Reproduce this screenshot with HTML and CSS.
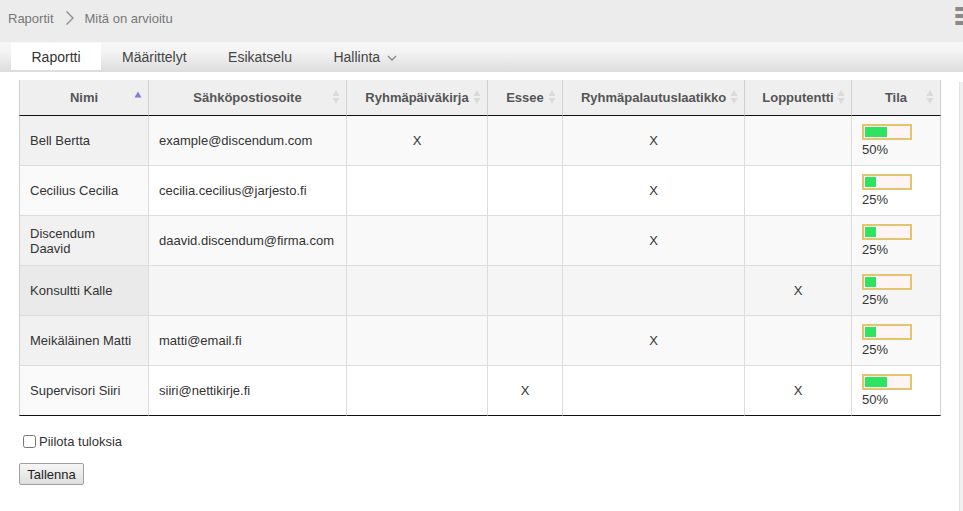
FILE: index.html
```html
<!DOCTYPE html>
<html lang="fi">
<head>
<meta charset="utf-8">
<title>Mitä on arvioitu</title>
<link rel="stylesheet" href="styles.css">
</head>
<body>
<header class="topbar">
  <nav class="crumbs">
    <span class="crumb">Raportit</span>
    <svg class="crumb-sep" width="10" height="16" viewBox="0 0 10 16"><path d="M1.5 1.5 L8 8 L1.5 14.5" fill="none" stroke="#8a8a8a" stroke-width="1.3"/></svg>
    <span class="crumb">Mitä on arvioitu</span>
  </nav>
  <div class="menu-icon"><span></span><span></span><span></span></div>
</header>
<nav class="tabs">
  <span class="tab active">Raportti</span>
  <span class="tab">Määrittelyt</span>
  <span class="tab">Esikatselu</span>
  <span class="tab">Hallinta <svg class="caret" width="10" height="6" viewBox="0 0 10 6"><path d="M1 1 L5 5 L9 1" fill="none" stroke="#888" stroke-width="1.3"/></svg></span>
</nav>
<div class="edge"></div>
<main class="content">
  <table class="report">
    <colgroup>
      <col class="c-name"><col class="c-mail"><col class="c-diary"><col class="c-essay"><col class="c-box"><col class="c-final"><col class="c-state">
    </colgroup>
    <thead>
      <tr>
        <th>Nimi<svg class="sort" width="8" height="16" viewBox="0 0 8 16"><path d="M0.5 8.5 L4 2.5 L7.5 8.5 Z" fill="#7d7ddc"/></svg></th>
        <th>Sähköpostiosoite<svg class="sort" width="8" height="16" viewBox="0 0 8 16"><path d="M0.5 7 L4 1 L7.5 7 Z M0.5 9 L4 15 L7.5 9 Z" fill="#dadada"/></svg></th>
        <th>Ryhmäpäiväkirja<svg class="sort" width="8" height="16" viewBox="0 0 8 16"><path d="M0.5 7 L4 1 L7.5 7 Z M0.5 9 L4 15 L7.5 9 Z" fill="#dadada"/></svg></th>
        <th>Essee<svg class="sort" width="8" height="16" viewBox="0 0 8 16"><path d="M0.5 7 L4 1 L7.5 7 Z M0.5 9 L4 15 L7.5 9 Z" fill="#dadada"/></svg></th>
        <th>Ryhmäpalautuslaatikko<svg class="sort" width="8" height="16" viewBox="0 0 8 16"><path d="M0.5 7 L4 1 L7.5 7 Z M0.5 9 L4 15 L7.5 9 Z" fill="#dadada"/></svg></th>
        <th>Lopputentti<svg class="sort" width="8" height="16" viewBox="0 0 8 16"><path d="M0.5 7 L4 1 L7.5 7 Z M0.5 9 L4 15 L7.5 9 Z" fill="#dadada"/></svg></th>
        <th>Tila<svg class="sort" width="8" height="16" viewBox="0 0 8 16"><path d="M0.5 7 L4 1 L7.5 7 Z M0.5 9 L4 15 L7.5 9 Z" fill="#dadada"/></svg></th>
      </tr>
    </thead>
    <tbody>
      <tr class="odd">
        <td class="sorted">Bell Bertta</td><td>example@discendum.com</td><td class="mark">X</td><td></td><td class="mark">X</td><td></td>
        <td><div class="bar"><div class="fill" style="width:50%"></div></div><div class="pct">50%</div></td>
      </tr>
      <tr class="even">
        <td class="sorted">Cecilius Cecilia</td><td>cecilia.cecilius@jarjesto.fi</td><td></td><td></td><td class="mark">X</td><td></td>
        <td><div class="bar"><div class="fill" style="width:25%"></div></div><div class="pct">25%</div></td>
      </tr>
      <tr class="odd">
        <td class="sorted">Discendum<br>Daavid</td><td>daavid.discendum@firma.com</td><td></td><td></td><td class="mark">X</td><td></td>
        <td><div class="bar"><div class="fill" style="width:25%"></div></div><div class="pct">25%</div></td>
      </tr>
      <tr class="even hover">
        <td class="sorted">Konsultti Kalle</td><td></td><td></td><td></td><td></td><td class="mark">X</td>
        <td><div class="bar"><div class="fill" style="width:25%"></div></div><div class="pct">25%</div></td>
      </tr>
      <tr class="odd">
        <td class="sorted">Meikäläinen Matti</td><td>matti@email.fi</td><td></td><td></td><td class="mark">X</td><td></td>
        <td><div class="bar"><div class="fill" style="width:25%"></div></div><div class="pct">25%</div></td>
      </tr>
      <tr class="even">
        <td class="sorted">Supervisori Siiri</td><td>siiri@nettikirje.fi</td><td></td><td class="mark">X</td><td></td><td class="mark">X</td>
        <td><div class="bar"><div class="fill" style="width:50%"></div></div><div class="pct">50%</div></td>
      </tr>
    </tbody>
  </table>
  <label class="hide-results"><input type="checkbox" class="check"><span>Piilota tuloksia</span></label>
  <div class="actions"><button class="btn" type="button">Tallenna</button></div>
</main>
</body>
</html>
```
FILE: styles.css
```css
* { box-sizing: border-box; }
html, body { margin: 0; padding: 0; }
body {
  font-family: "Liberation Sans", Arial, sans-serif;
  font-size: 13px;
  color: #333;
  background: #fff;
  width: 963px;
  height: 511px;
  overflow: hidden;
  position: relative;
}

.topbar {
  height: 42px;
  background: #ececec;
  display: flex;
  align-items: flex-start;
  justify-content: space-between;
}
.crumbs {
  display: flex;
  align-items: center;
  padding: 10px 0 0 8px;
  height: 26px;
  color: #777;
  font-size: 13px;
}
.crumb-sep { margin: 0 10px 0 11px; }
.menu-icon {
  display: flex;
  flex-direction: column;
  gap: 3px;
  padding-top: 7px;
  width: 8px;
}
.menu-icon span {
  display: block;
  height: 4px;
  width: 8px;
  background: #8a8a8a;
  border-left: 1px solid #d7a56b;
}

.tabs {
  height: 30px;
  padding: 1px 0 0 11px;
  background: linear-gradient(#f8f8f8, #f3f3f3 35%, #dcdcdc);
  display: flex;
  align-items: flex-start;
}
.tab {
  height: 27px;
  padding: 0 20.5px;
  margin-right: 0.5px;
  display: flex;
  align-items: center;
  gap: 7px;
  font-size: 14px;
  color: #444;
}
.tab.active { background: #fff; color: #333; }
.caret { margin-top: 2px; }

.edge {
  position: absolute;
  right: 0;
  top: 82px;
  bottom: 0;
  width: 4px;
  background: #f0f0f0;
  border-left: 1px solid #e2e2e2;
}

.content { padding: 8px 0 0 19px; }

.report {
  width: 922px;
  table-layout: fixed;
  border-collapse: separate;
  border-spacing: 0;
}
.c-name { width: 130px; }
.c-mail { width: 198px; }
.c-diary { width: 141px; }
.c-essay { width: 75px; }
.c-box { width: 182px; }
.c-final { width: 107px; }
.c-state { width: 89px; }

.report th {
  position: relative;
  height: 36px;
  padding: 0 10px 1px;
  background: #efefef;
  color: #555;
  font-weight: bold;
  font-size: 13px;
  text-align: center;
  white-space: nowrap;
  border-right: 1px solid #d0d0d0;
  border-bottom: 1px solid #111;
}
.report th:first-child { border-left: 1px solid #d0d0d0; }
.sort {
  position: absolute;
  right: 6px;
  top: 9px;
}

.report td {
  height: 50px;
  padding: 0 10px;
  vertical-align: middle;
  border-right: 1px solid #dcdcdc;
  border-bottom: 1px solid #dcdcdc;
  line-height: 15px;
}
.report td:first-child { border-left: 1px solid #d0d0d0; }
.report td:last-child { border-right-color: #d0d0d0; }
.report tbody tr:last-child td { border-bottom-color: #111; }

.report tr.odd td { background: #f9f9f9; }
.report tr.odd td.sorted { background: #f1f1f1; }
.report tr.even td { background: #fff; }
.report tr.even td.sorted { background: #fafafa; }
.report tr.hover td { background: #f5f5f5; }
.report tr.hover td.sorted { background: #eaeaea; }

.mark { text-align: center; }

.bar {
  width: 50px;
  height: 16px;
  border: 2px solid #e3c56f;
  padding: 1px;
  background: #fff4f4;
}
.fill { height: 100%; background: #2ee360; }
.pct { margin-top: 2px; font-size: 13px; color: #333; }

.hide-results {
  display: flex;
  align-items: center;
  margin-top: 17px;
  height: 16px;
  font-size: 13px;
  color: #333;
}
.check { margin: 0 3px 0 4px; width: 13px; height: 13px; }

.actions { margin-top: 14px; }
.btn {
  font-family: "Liberation Sans", Arial, sans-serif;
  font-size: 13px;
  color: #222;
  height: 22px;
  width: 65px;
  padding: 0;
  border: 1px solid #a0a0a0;
  border-radius: 2px;
  background: linear-gradient(#f6f6f6, #dedede);
}
```
